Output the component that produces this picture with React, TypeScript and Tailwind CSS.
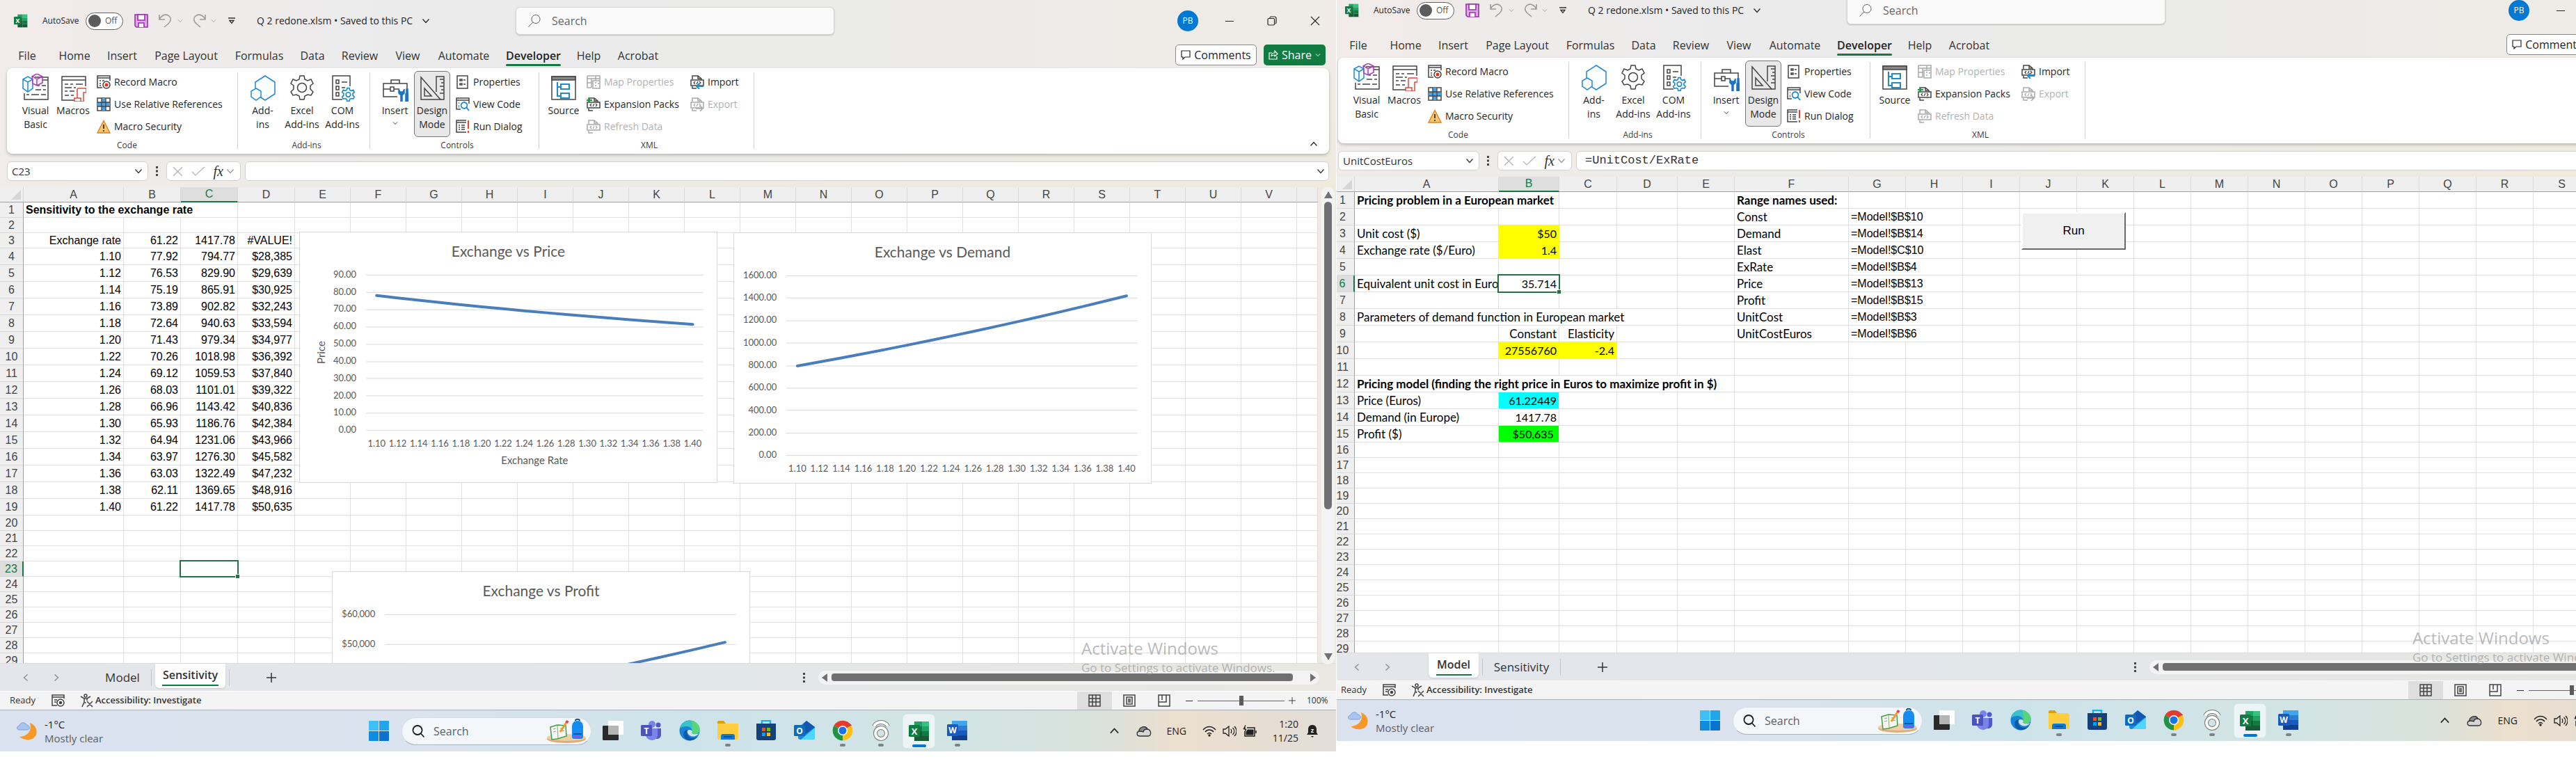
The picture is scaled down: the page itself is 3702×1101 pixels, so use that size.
import { Fragment } from "react";
import type { ReactNode } from "react";
import clsx from "clsx";

type SheetName = "Model" | "Sensitivity";

interface Cell {
  value: string;
  span?: number;
  className?: string;
}

interface SheetData {
  cols: { name: string; width: string }[];
  rowHeight: (row: number) => string;
  cells: Record<string, Cell>;
  font: string;
}

const RATES = ["1.10", "1.12", "1.14", "1.16", "1.18", "1.20", "1.22", "1.24", "1.26", "1.28", "1.30", "1.32", "1.34", "1.36", "1.38", "1.40"];
const PRICES = [77.92, 76.53, 75.19, 73.89, 72.64, 71.43, 70.26, 69.12, 68.03, 66.96, 65.93, 64.94, 63.97, 63.03, 62.11, 61.22];
const DEMANDS = [794.77, 829.9, 865.91, 902.82, 940.63, 979.34, 1018.98, 1059.53, 1101.01, 1143.42, 1186.76, 1231.06, 1276.3, 1322.49, 1369.65, 1417.78];
const PROFITS = [28385, 29639, 30925, 32243, 33594, 34977, 36392, 37840, 39322, 40836, 42384, 43966, 45582, 47232, 48916, 50635];

const RIGHT = "text-right";
const NUMBER = "text-right text-base leading-5";
const YELLOW = "text-right text-base leading-5 bg-[#ffff00] border-[#ffff00]";

const sensitivityCells: Record<string, Cell> = {
  A1: { value: "Sensitivity to the exchange rate", span: 3, className: "font-bold" },
  A3: { value: "Exchange rate", className: RIGHT },
  B3: { value: "61.22", className: RIGHT },
  C3: { value: "1417.78", className: RIGHT },
  D3: { value: "#VALUE!", className: RIGHT },
};
RATES.forEach((rate, i) => {
  const row = i + 4;
  sensitivityCells[`A${row}`] = { value: rate, className: RIGHT };
  sensitivityCells[`B${row}`] = { value: PRICES[i].toFixed(2), className: RIGHT };
  sensitivityCells[`C${row}`] = { value: DEMANDS[i].toFixed(2), className: RIGHT };
  sensitivityCells[`D${row}`] = { value: "$" + PROFITS[i].toLocaleString("en-US"), className: RIGHT };
});

const modelCells: Record<string, Cell> = {
  A1: { value: "Pricing problem in a European market", span: 2, className: "font-bold" },
  A3: { value: "Unit cost ($)" },
  B3: { value: "$50", className: YELLOW },
  A4: { value: "Exchange rate ($/Euro)" },
  B4: { value: "1.4", className: YELLOW },
  A6: { value: "Equivalent unit cost in Euros" },
  B6: { value: "35.714", className: NUMBER },
  A8: { value: "Parameters of demand function in European market", span: 4 },
  B9: { value: "Constant", className: RIGHT },
  C9: { value: "Elasticity", className: RIGHT },
  B10: { value: "27556760", className: YELLOW },
  C10: { value: "-2.4", className: YELLOW },
  A12: { value: "Pricing model (finding the right price in Euros to maximize profit in $)", span: 5, className: "font-bold" },
  A13: { value: "Price (Euros)" },
  B13: { value: "61.22449", className: "text-right text-base leading-5 bg-[#00ffff] border-[#00ffff]" },
  A14: { value: "Demand (in Europe)" },
  B14: { value: "1417.78", className: NUMBER },
  A15: { value: "Profit ($)" },
  B15: { value: "$50,635\u00a0", className: "text-right text-base leading-5 bg-[#00ff00] border-[#00ff00]" },
  F1: { value: "Range names used:", className: "font-bold" },
};
[
  ["Const", "$B$10"],
  ["Demand", "$B$14"],
  ["Elast", "$C$10"],
  ["ExRate", "$B$4"],
  ["Price", "$B$13"],
  ["Profit", "$B$15"],
  ["UnitCost", "$B$3"],
  ["UnitCostEuros", "$B$6"],
].forEach(([name, ref], i) => {
  modelCells[`F${i + 2}`] = { value: name };
  modelCells[`G${i + 2}`] = { value: `=Model!${ref}`, span: 2, className: "text-base leading-5 font-['Liberation_Sans',sans-serif]" };
});

const SHEETS: Record<SheetName, SheetData> = {
  Sensitivity: {
    cols: "ABCDEFGHIJKLMNOPQRSTUVW".split("").map((name) => ({
      name,
      width: name === "A" ? "w-[144px]" : "BCD".includes(name) ? "w-[82px]" : name === "W" ? "" : "w-[80px]",
    })),
    rowHeight: (row) => (row >= 4 && row <= 19 ? "h-[24px]" : "h-[22px]"),
    cells: sensitivityCells,
    font: "font-['Liberation_Sans',sans-serif]",
  },
  Model: {
    cols: [
      { name: "A", width: "w-[207px]" },
      { name: "B", width: "w-[87px]" },
      { name: "C", width: "w-[83px]" },
      { name: "D", width: "w-[87px]" },
      { name: "E", width: "w-[82px]" },
      { name: "F", width: "w-[164px]" },
      ..."GHIJKLMNOPQRS".split("").map((name) => ({ name, width: "w-[82px]" })),
      { name: "T", width: "" },
    ],
    rowHeight: (row) => (row <= 15 ? "h-[24px]" : "h-[22px]"),
    cells: modelCells,
    font: "font-['Lato',sans-serif] text-[17px] leading-5",
  },
};

/* ---------- small glyphs ---------- */

function Chevron({ className = "w-3 h-3", up = false }: { className?: string; up?: boolean }) {
  return (
    <svg viewBox="0 0 12 12" className={clsx("shrink-0", className)} fill="none" stroke="currentColor" strokeWidth="1.3">
      <path d={up ? "M1.5 8.5 6 3.5l4.5 5" : "M1.5 3.5 6 8.5l4.5-5"} />
    </svg>
  );
}

function Dots() {
  return (
    <svg viewBox="0 0 4 16" className="w-1 h-4 shrink-0" fill="#444">
      <path d="M0 1h3v3H0zM0 6.500h3v3H0zM0 12h3v3H0z" />
    </svg>
  );
}

function SearchGlyph({ className, flip = false }: { className: string; flip?: boolean }) {
  return (
    <svg viewBox="0 0 20 20" className={clsx("shrink-0", className)} fill="none" stroke="currentColor">
      {flip ? <path d="M9 2a6.500 6.500 0 1 0 .01 0zM13.500 13l5 5.500" /> : <path d="M12 1.500a6 6 0 1 0 .01 0zM7.800 12 1.500 18.500" />}
    </svg>
  );
}

function ExcelLogo({ className }: { className: string }) {
  return (
    <svg viewBox="0 0 30 30" className={clsx("shrink-0", className)}>
      <path d="M8 1h11v7H8z" fill="#21a366" />
      <path d="M19 1h10v7H19z" fill="#33c481" />
      <path d="M8 8h11v7H8z" fill="#107c41" />
      <path d="M19 8h10v7H19z" fill="#21a366" />
      <path d="M8 15h11v14H8z" fill="#185c37" />
      <path d="M19 15h10v7H19z" fill="#107c41" />
      <path d="M19 22h10v7H19z" fill="#185c37" />
      <rect x="0" y="6" width="16" height="17" rx="1.500" fill="#107c41" />
      <text x="8" y="19.500" textAnchor="middle" fontSize="13" fontWeight="700" fill="#fff" fontFamily="Open Sans">X</text>
    </svg>
  );
}

function WordLogo({ className }: { className: string }) {
  return (
    <svg viewBox="0 0 30 30" className={className}>
      <path d="M7 1h22v7H7z" fill="#41a5ee" />
      <path d="M7 8h22v7H7z" fill="#2b7cd3" />
      <path d="M7 15h22v7H7z" fill="#185abd" />
      <path d="M7 22h22v7H7z" fill="#103f91" />
      <rect x="0" y="6" width="16" height="17" rx="1.500" fill="#185abd" />
      <text x="8" y="19" textAnchor="middle" fontSize="12" fontWeight="700" fill="#fff" fontFamily="Open Sans">W</text>
    </svg>
  );
}

/* ---------- ribbon icons ---------- */

const big = "w-[38px] h-10 shrink-0";
const small = "w-5 h-5 shrink-0";
const line = { fill: "none", stroke: "#444", strokeWidth: 1.5 };

const VisualBasicIcon = (
  <svg viewBox="0 0 38 40" className={big} {...line}>
    <path d="M18 5h19v32H3V28M29 9h8M22 17h3m3 0h6M19 23h8m3 0h4M6 30h4m3 0h11m3 0h7" />
    <path d="M1 8l7-4 7 4v13l-7 5-7-5zM1 8l7 4 7-4M8 12v14" fill="#f2f9fe" stroke="#1e8bcd" />
    <path d="M14 4l7-4 8 4v9l-8 4-6-3V8zM15 4l6 4 8-4M21 8v9" fill="#faf0fb" stroke="#a63fb2" />
  </svg>
);

const MacrosIcon = (
  <svg viewBox="0 0 38 40" className={big} {...line}>
    <path d="M37 18V4H3v34h18M3 9h34M7 15h5m3 0h4m4 0h10M7 20h10m3 0h3M7 25h4m3 0h7M7 31h6m3 0h4" />
    <path d="M26 21h12v6h-4v13H21v-5h4V24c0-2 .500-3 1-3zM25 35h5v5" fill="#fff" stroke="#e8453c" />
  </svg>
);

const AddInsIcon = (
  <svg viewBox="0 0 38 40" className={big} fill="#fbfdff" stroke="#2287d4" strokeWidth="1.500">
    <path d="M22 3l14 9v17l-14 9-14-9V12z" />
    <path d="M9 21l7 4v8l-7 5-7-5v-8z" fill="#fff" />
  </svg>
);

const GEAR = "M16 3h6l1 5 4 2 5-2 3 6-4 3v5l4 4-3 5-5-1-4 2-1 5h-6l-1-5-4-2-5 1-3-5 4-4v-5l-4-3 3-6 5 2 4-2z";

const ExcelAddInsIcon = (
  <svg viewBox="0 0 38 40" className={big} {...line}>
    <path d={GEAR} />
    <circle cx="19" cy="20" r="6.500" />
  </svg>
);

const ComAddInsIcon = (
  <svg viewBox="0 0 38 40" className={big} {...line}>
    <path d="M30 18V3H5v34h14M10 9h4v5h-4zM10 18h4v5h-4zM10 27h4v5h-4zM18 12h8M18 20h5" />
    <g transform="translate(17 19) scale(.550)" stroke="#1e8bcd" strokeWidth="3">
      <path d={GEAR} fill="#fff" />
      <circle cx="19" cy="20" r="6" />
    </g>
  </svg>
);

const InsertIcon = (
  <svg viewBox="0 0 38 40" className={big} {...line}>
    <path d="M22 33H2V14h34v8M13 14V9h12v5M2 22h10m5 0h8M12 19h5v6h-5z" />
    <path d="M24 22v6l3 3v9h2v-9l3-3v-6l-2 4h-4zM35 22h2v7h1v11h-4V29h1z" fill="#1a73c4" stroke="#1a73c4" />
  </svg>
);

const DesignModeIcon = (
  <svg viewBox="0 0 38 40" className={big} {...line}>
    <path d="M3 5v32h28zM8 21v11h10z" />
    <path d="M25 26V4h11v33h-5M30 8h6M32 13h4M30 18h6M32 23h4M30 28h6" />
  </svg>
);

const SourceIcon = (
  <svg viewBox="0 0 38 40" className={big} {...line}>
    <path d="M2 4h34v33H2z" />
    <path d="M2 4h34v5H2z" fill="#8a8886" />
    <path d="M10 12v20h5M10 19h5M15 15h12v7H15zM15 28h12v7H15z" stroke="#1e8bcd" strokeWidth="2" />
  </svg>
);

const RecordMacroIcon = (
  <svg viewBox="0 0 20 20" className={small} {...line}>
    <path d="M19 8V1H1v17h7M1 4h18M4 8h2m2 0h3M4 12h2M4 15h2" />
    <circle cx="14" cy="14" r="5" fill="#fff" />
    <circle cx="14" cy="14" r="2.500" fill="#e8301c" stroke="none" />
  </svg>
);

const RelativeRefIcon = (
  <svg viewBox="0 0 20 20" className={small}>
    <path d="M1 1h18v18H1z" fill="#fff" stroke="#444" strokeWidth="1.500" />
    <path d="M1 7h18v6H1zM7 1h6v18H7z" fill="#4ba3e3" />
    <path d="M1 7h18M1 13h18M7 1v18M13 1v18" stroke="#444" strokeWidth="1.300" />
  </svg>
);

const MacroSecurityIcon = (
  <svg viewBox="0 0 20 20" className={small}>
    <path d="M10 1.500 19 19H1z" fill="#f9c76b" stroke="#e07f1c" strokeWidth="1.300" />
    <path d="M10 7v6M10 15v2" stroke="#333" strokeWidth="1.800" />
  </svg>
);

const PropertiesIcon = (
  <svg viewBox="0 0 20 20" className={small} {...line}>
    <path d="M2 1h15v18H2zM6 6h3v2H6zM6 12h3v2H6zM11 7h3M11 13h3" />
  </svg>
);

const ViewCodeIcon = (
  <svg viewBox="0 0 20 20" className={small} {...line}>
    <path d="M19 9V1H1v16h6M1 4h18M4 8h1M4 12h1M4 14h1" />
    <path d="M12 7a4.500 4.500 0 1 0 .01 0zM15 14l4 5" stroke="#1e8bcd" strokeWidth="1.800" />
  </svg>
);

const RunDialogIcon = (
  <svg viewBox="0 0 20 20" className={small} {...line}>
    <path d="M15 1H1v17h14M1 4h14M4 8h2m2 0h5M4 11h2m2 0h5M4 14h2m2 0h5" />
    <path d="M18 1v12M18 16v3" stroke="#e8301c" strokeWidth="1.800" />
  </svg>
);

const MapPropertiesIcon = (
  <svg viewBox="0 0 20 20" className={small} fill="none" stroke="#a9a9a9" strokeWidth="1.500">
    <path d="M1 1h18v6M1 1v17h6M1 5h18M1 11h7M7 5v13M13 2v5M9 8h10v11H9zM12 11h2M12 15h2M16 12h2" />
  </svg>
);

function XmlIcon({ color, mark }: { color: string; mark?: ReactNode }) {
  return (
    <svg viewBox="0 0 20 20" className={small} fill="none" stroke={color} strokeWidth="1.500">
      <path d="M3 6V1h8l5 4v2M11 1v4h4M1 7h18v8H1zM3 16v3h6" />
      <path d="M7 9l-2 2 2 2M13 9l2 2-2 2M11 9l-2 4" strokeWidth="1.200" />
      {mark}
    </svg>
  );
}

function BigButton({ icon, lines, className, pressed = false }: { icon: ReactNode; lines: string[]; className: string; pressed?: boolean }) {
  return (
    <button
      type="button"
      aria-pressed={pressed || undefined}
      className={clsx(
        "mt-1 h-[95px] pt-[3px] flex flex-col items-center rounded-md border shrink-0 leading-5 whitespace-nowrap",
        pressed ? "bg-[#e8e8e8] border-[#767676]" : "border-transparent",
        className
      )}
    >
      {icon}
      <span className="mt-[3px]">{lines[0]}</span>
      {lines[1] ? <span>{lines[1]}</span> : null}
      {lines[0] === "Insert" && <Chevron className="w-2 h-4" />}
    </button>
  );
}

function SmallButton({ icon, label, disabled = false }: { icon: ReactNode; label: string; disabled?: boolean }) {
  return (
    <button type="button" disabled={disabled} className={clsx("h-8 flex items-center gap-[5px] whitespace-nowrap", disabled && "text-[#b1b1b1]")}>
      {icon}
      {label}
    </button>
  );
}

function RibbonGroup({ label, className, children }: { label: string; className: string; children: ReactNode }) {
  return (
    <>
      <section className={clsx("flex flex-col shrink-0", className)}>
        <div className="flex h-[103px]">{children}</div>
        <h2 className="text-xs leading-4 text-center text-[#3b3b3b]">{label}</h2>
      </section>
      <div className="w-px h-[110px] mt-[6px] bg-[#d1d1d1] shrink-0" />
    </>
  );
}

function Ribbon() {
  return (
    <div className="mx-[10px] h-[123px] flex bg-white rounded-lg shadow-[0_2px_4px_rgba(0,0,0,0.22)] text-sm text-[#262626]">
      <RibbonGroup label="Code" className="w-[331px] pl-[14px]">
        <BigButton icon={VisualBasicIcon} lines={["Visual", "Basic"]} className="w-[54px]" />
        <BigButton icon={MacrosIcon} lines={["Macros"]} className="w-[54px]" />
        <div className="mt-1 ml-[7px] flex flex-col">
          <SmallButton icon={RecordMacroIcon} label="Record Macro" />
          <SmallButton icon={RelativeRefIcon} label="Use Relative References" />
          <SmallButton icon={MacroSecurityIcon} label="Macro Security" />
        </div>
      </RibbonGroup>
      <RibbonGroup label="Add-ins" className="w-[189px] pl-2">
        <BigButton icon={AddInsIcon} lines={["Add-", "ins"]} className="w-[55px]" />
        <BigButton icon={ExcelAddInsIcon} lines={["Excel", "Add-ins"]} className="w-[58px]" />
        <BigButton icon={ComAddInsIcon} lines={["COM", "Add-ins"]} className="w-[58px]" />
      </RibbonGroup>
      <RibbonGroup label="Controls" className="w-[242px] pl-2">
        <BigButton icon={InsertIcon} lines={["Insert"]} className="w-[55px]" />
        <BigButton icon={DesignModeIcon} lines={["Design", "Mode"]} className="w-[52px]" pressed />
        <div className="mt-1 ml-2 flex flex-col">
          <SmallButton icon={PropertiesIcon} label="Properties" />
          <SmallButton icon={ViewCodeIcon} label="View Code" />
          <SmallButton icon={RunDialogIcon} label="Run Dialog" />
        </div>
      </RibbonGroup>
      <RibbonGroup label="XML" className="w-[308px] pl-2">
        <BigButton icon={SourceIcon} lines={["Source"]} className="w-[54px]" />
        <div className="mt-1 ml-[6px] w-[149px] flex flex-col">
          <SmallButton icon={MapPropertiesIcon} label="Map Properties" disabled />
          <SmallButton icon={<XmlIcon color="#444" mark={<path d="M4 0v8M0 4h8" stroke="#1f9d45" strokeWidth="2" />} />} label="Expansion Packs" />
          <SmallButton icon={<XmlIcon color="#a9a9a9" />} label="Refresh Data" disabled />
        </div>
        <div className="mt-1 flex flex-col">
          <SmallButton icon={<XmlIcon color="#444" mark={<path d="M19 16H9m4-4-4 4 4 4" stroke="#1e8bcd" strokeWidth="2" />} />} label="Import" />
          <SmallButton icon={<XmlIcon color="#a9a9a9" mark={<path d="M8 16h10m-4-4 4 4-4 4" strokeWidth="1.500" />} />} label="Export" disabled />
        </div>
      </RibbonGroup>
      <button type="button" aria-label="Collapse ribbon" className="ml-auto mr-4 mb-1 self-end h-5">
        <Chevron up className="w-3 h-3" />
      </button>
    </div>
  );
}

/* ---------- window header ---------- */

function TitleBar({ id }: { id: string }) {
  return (
    <header className="h-[60px] flex items-center text-sm text-[#262626]">
      <div className="w-[741px] pl-5 flex items-center shrink-0">
        <ExcelLogo className="w-5 h-5" />
        <label htmlFor={`${id}-autosave`} className="ml-[21px] w-[62px] text-xs">AutoSave</label>
        <input id={`${id}-autosave`} type="checkbox" role="switch" className="sr-only" />
        <span className="w-[54px] h-[25px] pl-[3px] flex items-center gap-[6px] rounded-full border border-[#616161] bg-white text-xs text-[#555]" aria-hidden="true">
          <span className="w-[18px] h-[18px] rounded-full bg-[#5c5c5c]" />
          Off
        </span>
        <svg viewBox="0 0 20 20" className="ml-4 w-5 h-5 shrink-0" fill="#dfa9e6" stroke="#9b2fae" strokeWidth="1.600">
          <path d="M1 1h18v18H3l-2-2z" />
          <path d="M5 1h10v8H5zM6 19v-6h8v6" fill="#fff" />
        </svg>
        <svg viewBox="0 0 20 20" className="ml-[15px] w-5 h-5 shrink-0" fill="none" stroke="#9c9c9c" strokeWidth="1.600">
          <path d="M1 1v7h8M1 8C4 2 10-1 15 3c4 4 2 8-1 11l-6 5" />
        </svg>
        <Chevron className="ml-[7px] w-2 h-2 text-[#9c9c9c]" />
        <svg viewBox="0 0 20 20" className="ml-[13px] w-5 h-5 shrink-0" fill="none" stroke="#9c9c9c" strokeWidth="1.600">
          <path d="M19 1v7h-8M19 8C16 2 10-1 5 3c-4 4-2 8 1 11l6 5" />
        </svg>
        <Chevron className="ml-[7px] w-2 h-2 text-[#9c9c9c]" />
        <svg viewBox="0 0 10 10" className="ml-[17px] w-[10px] h-[10px] shrink-0" fill="none" stroke="#333" strokeWidth="1.300">
          <path d="M0 1h10M2 4.500l3 4 3-4z" />
        </svg>
        <span className="ml-[31px] w-[237px] whitespace-nowrap">Q 2 redone.xlsm • Saved to this PC</span>
        <Chevron className="w-3 h-3" />
      </div>
      <label className="w-[458px] h-10 px-4 flex items-center gap-[15px] shrink-0 rounded-md border border-[#d6d6d6] bg-[#fafafa] shadow-[0_1px_2px_rgba(0,0,0,0.2)] text-[#5f5f5f]">
        <SearchGlyph className="w-5 h-5" />
        <input type="text" aria-label="Search" placeholder="Search" className="flex-1 text-base bg-transparent outline-none placeholder:text-[#666]" />
      </label>
      <div className="ml-auto flex items-center text-[#262626]">
        <span className="w-[30px] h-[30px] mr-[39px] rounded-full bg-[#0078d4] text-white text-xs flex items-center justify-center">PB</span>
        <button type="button" aria-label="Minimize" className="w-[12px] h-4 mr-12 flex items-center">
          <span className="w-full h-[1px] bg-[#262626]" />
        </button>
        <button type="button" aria-label="Restore" className="mr-12">
          <svg viewBox="0 0 14 14" className="w-[14px] h-[14px]" fill="none" stroke="currentColor" strokeWidth="1.200">
            <rect x="1" y="3.500" width="9.500" height="9.500" rx="1.500" />
            <path d="M4 3V2.500C4 1.500 5 1 6 1h4.500C12.500 1 13 2 13 3.500V9c0 1-.500 2-1.500 2" />
          </svg>
        </button>
        <button type="button" aria-label="Close" className="mr-[23px]">
          <svg viewBox="0 0 14 14" className="w-[14px] h-[14px]" stroke="currentColor" strokeWidth="1.200">
            <path d="M1 1l12 12M13 1 1 13" />
          </svg>
        </button>
      </div>
    </header>
  );
}

const TABS = [
  { name: "File", width: "w-[66px]" },
  { name: "Home", width: "w-[70px]" },
  { name: "Insert", width: "w-[67px]" },
  { name: "Page Layout", width: "w-[117px]" },
  { name: "Formulas", width: "w-[93px]" },
  { name: "Data", width: "w-[60px]" },
  { name: "Review", width: "w-[76px]" },
  { name: "View", width: "w-[62px]" },
  { name: "Automate", width: "w-[99px]" },
  { name: "Developer", width: "w-[101px]" },
  { name: "Help", width: "w-[58px]" },
  { name: "Acrobat", width: "w-[84px]" },
];

function MenuTabs() {
  return (
    <nav className="h-[38px] pl-[6px] flex text-base text-[#333]">
      {TABS.map((tab) => {
        const active = tab.name === "Developer";
        return (
          <button key={tab.name} type="button" className={clsx("pt-2 flex flex-col items-center shrink-0 whitespace-nowrap", tab.width)}>
            <span className={clsx("leading-6", active && "font-semibold text-[#222]")}>{tab.name}</span>
            {active && <span className="w-[79px] h-[3px] rounded-sm bg-[#107c41]" />}
          </button>
        );
      })}
      <div className="ml-auto mr-[15px] flex items-center gap-[10px]">
        <button type="button" className="w-[117px] h-[30px] flex items-center justify-center gap-[5px] rounded-[5px] border border-[#8a8a8a] bg-white text-[#262626]">
          <svg viewBox="0 0 14 14" className="w-[14px] h-[14px]" fill="none" stroke="currentColor" strokeWidth="1.200">
            <path d="M1 1h12v9H6l-3 3v-3H1z" />
          </svg>
          Comments
        </button>
        <button type="button" className="w-[89px] h-[30px] flex items-center justify-center gap-[5px] rounded-[5px] bg-[#107c41] text-white">
          <svg viewBox="0 0 14 14" className="w-[14px] h-[14px]" fill="none" stroke="currentColor" strokeWidth="1.200">
            <path d="M5 4H1v9h11V9M4 9c0-4 2-5 5-5V1l4 4.500L9 9V7C7 7 5 7 4 9z" />
          </svg>
          Share
          <Chevron className="w-2 h-2" />
        </button>
      </div>
    </nav>
  );
}

function FormulaBar({ cell, formula }: { cell: string; formula: string }) {
  const box = "h-7 flex items-center rounded-md border border-[#d1d1d1] bg-white";
  return (
    <div className="mt-[11px] mb-[9px] mx-[10px] flex items-center text-[#333]">
      <div className={clsx(box, "w-[203px] pl-[6px] pr-[7px]")}>
        <input aria-label="Name box" defaultValue={cell} className="flex-1 min-w-0 text-[15px] outline-none" />
        <Chevron className="w-3 h-3" />
      </div>
      <div className="w-[26px] flex justify-center">
        <Dots />
      </div>
      <div className={clsx(box, "w-[107px] px-2 gap-3")}>
        <svg viewBox="0 0 14 14" className="w-[15px] h-[15px]" stroke="#b5b5b5" strokeWidth="1.300">
          <path d="M1 1l12 12M13 1 1 13" />
        </svg>
        <svg viewBox="0 0 20 14" className="w-5 h-[14px]" fill="none" stroke="#b5b5b5" strokeWidth="1.300">
          <path d="M1 8l5 5L19 1" />
        </svg>
        <span className="font-['Liberation_Serif',serif] italic text-xl leading-6">fx</span>
        <Chevron className="-ml-2 w-3 h-3 text-[#999]" />
      </div>
      <div className={clsx(box, "ml-[6px] flex-1 pl-3 pr-[5px]")}>
        <input aria-label="Formula" defaultValue={formula} className="flex-1 min-w-0 font-['Liberation_Mono',monospace] text-[17px] outline-none" />
        <Chevron className="w-3 h-3" />
      </div>
    </div>
  );
}

/* ---------- charts ---------- */

interface ChartProps {
  title: string;
  values: number[];
  ticks: number[];
  format: (n: number) => string;
  left: number;
  bottom: number;
  step: number;
  xTitle?: string;
  yTitle?: string;
  className: string;
}

function LineChart({ title, values, ticks, format, left, bottom, step, xTitle, yTitle, className }: ChartProps) {
  const right = 581;
  const top = 61;
  const slot = (right - left) / values.length;
  const unit = step / (ticks[0] - ticks[1]);
  const max = ticks[0];
  const points = values.map((v, i) => `${left + slot * (i + 0.5)},${top + (max - v) * unit}`).join(" ");

  return (
    <figure className={clsx("absolute w-[601px] h-[361px] bg-white border border-[#d9d9d9]", className)}>
      <svg viewBox="0 0 600 360" className="w-full h-full font-['Lato',sans-serif]" fill="#595959">
        <text x="300" y="35" textAnchor="middle" fontSize="21">{title}</text>
        {ticks.map((tick, i) => (
          <Fragment key={tick}>
            <path d={`M${left} ${Math.round(top + i * step) + 0.5}H${right}`} stroke="#d9d9d9" />
            <text x={left - 14} y={top + i * step + 4} textAnchor="end" fontSize="13">{format(tick)}</text>
          </Fragment>
        ))}
        {RATES.map((rate, i) => (
          <text key={rate} x={left + slot * (i + 0.5)} y={bottom + 24} textAnchor="middle" fontSize="13">{rate}</text>
        ))}
        {xTitle && <text x={(left + right) / 2} y={bottom + 49} textAnchor="middle" fontSize="15">{xTitle}</text>}
        {yTitle && <text transform="translate(36 173) rotate(-90)" textAnchor="middle" fontSize="15">{yTitle}</text>}
        <polyline points={points} fill="none" stroke="#4a7ebb" strokeWidth="4" strokeLinecap="round" strokeLinejoin="round" />
      </svg>
    </figure>
  );
}

function SensitivityCharts() {
  const twoDigits = (n: number) => n.toFixed(2);
  return (
    <>
      <LineChart title="Exchange vs Price" values={PRICES} ticks={[90, 80, 70, 60, 50, 40, 30, 20, 10, 0]} format={twoDigits} left={95} bottom={285} step={24.9} xTitle="Exchange Rate" yTitle="Price" className="left-[430px] top-[64px]" />
      <LineChart title="Exchange vs Demand" values={DEMANDS} ticks={[1600, 1400, 1200, 1000, 800, 600, 400, 200, 0]} format={twoDigits} left={75} bottom={320} step={32.4} className="left-[1054px] top-[65px]" />
      <LineChart title="Exchange vs Profit" values={PROFITS} ticks={[60000, 50000, 40000, 30000, 20000, 10000, 0]} format={(n) => "$" + n.toLocaleString("en-US")} left={75} bottom={320} step={43.2} className="left-[477px] top-[552px]" />
    </>
  );
}

/* ---------- grid ---------- */

const ROWS = Array.from({ length: 29 }, (_, i) => i + 1);

function Grid({ sheet, selected, children }: { sheet: SheetData; selected: string; children: ReactNode }) {
  const selCol = selected[0];
  const selRow = Number(selected.slice(1));

  return (
    <div className="relative flex-1 min-w-0 h-[684px] overflow-hidden bg-white">
      <table className="w-full table-fixed border-separate border-spacing-0 text-base leading-5 text-black">
        <colgroup>
          <col className="w-[34px]" />
          {sheet.cols.map((col) => (
            <col key={col.name} className={col.width} />
          ))}
        </colgroup>
        <thead>
          <tr className="h-[22px] bg-[#efefef] font-['Liberation_Sans',sans-serif] text-[#444]">
            <th className="p-0 border-r border-b border-r-[#d4d4d4] border-b-[#a0a0a0]">
              <svg viewBox="0 0 14 14" className="ml-auto mr-[3px] w-[14px] h-[14px]" fill="#d6d6d6">
                <path d="M14 0v14H0z" />
              </svg>
            </th>
            {sheet.cols.map((col, i) => (
              <th
                key={col.name}
                scope="col"
                className={clsx(
                  "p-0 font-normal border-r border-r-[#d9d9d9] overflow-hidden",
                  col.name === selCol ? "bg-[#dedede] text-[#107c41] border-b-2 border-b-[#107c41]" : "border-b border-b-[#a0a0a0]"
                )}
              >
                {i === sheet.cols.length - 1 ? "" : col.name}
              </th>
            ))}
          </tr>
        </thead>
        <tbody className={sheet.font}>
          {ROWS.map((row) => {
            let skip = 0;
            return (
              <tr key={row} className={sheet.rowHeight(row)}>
                <th
                  scope="row"
                  className={clsx(
                    "p-0 font-normal text-base leading-5 font-['Liberation_Sans',sans-serif] border-b border-b-[#d9d9d9]",
                    row === selRow ? "bg-[#dedede] text-[#107c41] border-r-2 border-r-[#107c41]" : "bg-[#efefef] text-[#444] border-r border-r-[#a0a0a0]"
                  )}
                >
                  {row}
                </th>
                {sheet.cols.map((col) => {
                  if (skip > 0) {
                    skip -= 1;
                    return null;
                  }
                  const ref = `${col.name}${row}`;
                  const cell = sheet.cells[ref];
                  skip = (cell?.span ?? 1) - 1;
                  const isSelected = ref === selected;
                  return (
                    <td
                      key={ref}
                      colSpan={cell?.span}
                      className={clsx(
                        "py-0 px-[3px] border-r border-b border-[#e0e0e0] whitespace-nowrap",
                        isSelected ? "relative" : "overflow-hidden",
                        cell?.className
                      )}
                    >
                      {cell?.value}
                      {isSelected && (
                        <span className="absolute -inset-[2px] border-2 border-[#217346]">
                          <span className="absolute -right-[3px] -bottom-[3px] w-[6px] h-[6px] bg-[#217346] border-t border-l border-white" />
                        </span>
                      )}
                    </td>
                  );
                })}
              </tr>
            );
          })}
        </tbody>
      </table>
      {children}
    </div>
  );
}

function VerticalScroll() {
  return (
    <div className="w-[26px] h-[686px] -mb-[2px] pl-[5px] pr-[2px] shrink-0">
      <div className="h-full flex flex-col items-center rounded-full bg-[#f3f3f3] text-[#707070]">
        <svg viewBox="0 0 12 10" className="mt-[6px] w-3 h-[10px]" fill="currentColor">
          <path d="M6 0l6 10H0z" />
        </svg>
        <div className="mt-[5px] w-[11px] h-[442px] rounded-full bg-[#707070]" />
        <svg viewBox="0 0 12 10" className="mt-auto mb-[6px] w-3 h-[10px]" fill="currentColor">
          <path d="M6 10 0 0h12z" />
        </svg>
      </div>
    </div>
  );
}

/* ---------- bottom bars ---------- */

function SheetTab({ name, active, className }: { name: SheetName; active: boolean; className: string }) {
  return (
    <button type="button" className={clsx("flex flex-col items-center text-[#333]", active ? "h-[35px] pt-1 rounded-b-md bg-white text-base font-semibold shadow-sm" : "h-[39px] pt-2 text-[17px]", className)}>
      <span className="leading-6">{name}</span>
      {active && <span className={clsx("mt-[2px] h-[2px] bg-[#107c41]", name === "Model" ? "w-[51px]" : "w-[81px]")} />}
    </button>
  );
}

function SheetBar({ active }: { active: SheetName }) {
  return (
    <div className="h-10 flex bg-linear-to-r from-[#e4e6ec] via-[#e2e7ea] to-[#e9e7e0] border-t border-[#dcdcdc]">
      <div className="w-[140px] pl-[31px] flex items-center gap-8 shrink-0 text-[#8a8a8a]">
        <Chevron className="w-3 h-3 rotate-90" />
        <Chevron className="w-3 h-3 -rotate-90" />
      </div>
      <SheetTab name="Model" active={active === "Model"} className="w-[72px]" />
      <span className="mx-[5px] mt-2 w-px h-6 bg-[#c4c4c4]" />
      <SheetTab name="Sensitivity" active={active === "Sensitivity"} className="w-[101px]" />
      <span className="mx-[5px] mt-2 w-px h-6 bg-[#c4c4c4]" />
      <button type="button" aria-label="New sheet" className="ml-[48px] flex items-center text-[#333]">
        <svg viewBox="0 0 14 14" className="w-[14px] h-[14px]" stroke="currentColor" strokeWidth="1.500">
          <path d="M7 0v14M0 7h14" />
        </svg>
      </button>
      <div className="ml-auto mr-6 w-[742px] flex items-center gap-[18px]">
        <Dots />
        <div className="flex-1 h-5 px-[5px] flex items-center rounded-full bg-[#f3f3f3] text-[#707070]">
          <svg viewBox="0 0 8 12" className="w-2 h-3" fill="currentColor">
            <path d="M8 0v12L0 6z" />
          </svg>
          <div className="ml-[6px] mr-[25px] flex-1 h-[11px] rounded bg-[#707070]" />
          <svg viewBox="0 0 8 12" className="w-2 h-3" fill="currentColor">
            <path d="M0 0v12l8-6z" />
          </svg>
        </div>
      </div>
    </div>
  );
}

function StatusBar({ id }: { id: string }) {
  return (
    <div className="h-7 flex items-center bg-[#f4f4f4] border-t border-t-white border-b border-b-[#a9b0b8] text-[13px] text-[#333]">
      <span className="pl-[14px] w-[74px]">Ready</span>
      <svg viewBox="0 0 20 18" className="w-5 h-[18px]" {...line}>
        <path d="M18 6V1H1v15h7M1 4h17M4 8h4M4 11h3" />
        <circle cx="13" cy="12" r="5" />
        <circle cx="13" cy="12" r="1.500" fill="#444" />
      </svg>
      <svg viewBox="0 0 20 20" className="ml-5 mr-[3px] w-5 h-5" {...line}>
        <circle cx="9" cy="3" r="2" />
        <path d="M2 4l5 3v5l-3 7M16 4l-5 3v3M7 7h4M9 12l-1 2M11 11l8 8M19 11l-8 8" />
      </svg>
      <span className="font-semibold">Accessibility: Investigate</span>
      <div className="ml-auto flex items-center h-full">
        <button type="button" aria-label="Normal view" className="w-[50px] h-full flex items-center justify-center bg-[#dedede]">
          <svg viewBox="0 0 18 18" className="w-[18px] h-[18px]" {...line}>
            <path d="M1 1h16v16H1zM1 6h16M1 11h16M6 1v16M11 1v16" />
          </svg>
        </button>
        <button type="button" aria-label="Page layout view" className="w-[50px] h-full flex items-center justify-center">
          <svg viewBox="0 0 18 18" className="w-[18px] h-[18px]" {...line}>
            <path d="M1 1h16v16H1zM5 4h8v10H5zM7 7h4M7 9h4M7 11h4" />
          </svg>
        </button>
        <button type="button" aria-label="Page break view" className="w-[50px] h-full flex items-center justify-center">
          <svg viewBox="0 0 18 18" className="w-[18px] h-[18px]" {...line}>
            <path d="M1 1h16v16H1zM6 1v7M12 1v10H1" />
          </svg>
        </button>
        <span className="ml-[6px] w-[10px] h-px bg-[#333]" />
        <input
          id={`${id}-zoom`}
          type="range"
          aria-label="Zoom"
          min={10}
          max={190}
          defaultValue={100}
          className="ml-[7px] mr-[6px] w-[125px] h-4 appearance-none bg-linear-to-r from-[#666] to-[#666] bg-[length:100%_1px] bg-center bg-no-repeat [&::-webkit-slider-thumb]:appearance-none [&::-webkit-slider-thumb]:w-[6px] [&::-webkit-slider-thumb]:h-[14px] [&::-webkit-slider-thumb]:bg-[#5c5c5c]"
        />
        <svg viewBox="0 0 10 10" className="w-[10px] h-[10px]" stroke="#444" strokeWidth="1">
          <path d="M5 0v10M0 5h10" />
        </svg>
        <label htmlFor={`${id}-zoom`} className="ml-4 w-[42px] text-xs">100%</label>
      </div>
    </div>
  );
}

const APPS: { name: string; icon: ReactNode; state?: "open" | "active" }[] = [
  {
    name: "Task view",
    icon: (
      <svg viewBox="0 0 30 30" className="w-[30px] h-[30px]">
        <rect x="0" y="8" width="23" height="21" rx="1" fill="#2a2a2a" />
        <rect x="8" y="1" width="22" height="20" rx="1" fill="#fff" />
        <path d="M8 8h15v13H8z" fill="#b5b5b5" />
      </svg>
    ),
  },
  {
    name: "Teams",
    icon: (
      <svg viewBox="0 0 30 30" className="w-[30px] h-[30px]">
        <circle cx="16" cy="6" r="5" fill="#7b83eb" />
        <circle cx="25" cy="7" r="3.500" fill="#5059c9" />
        <path d="M19 12h10v9c0 4-3 6-6 6h-4z" fill="#5059c9" />
        <path d="M7 12h17v10c0 4-4 7-8 7s-9-3-9-8z" fill="#7b83eb" />
        <rect x="0" y="7" width="16" height="16" rx="1.500" fill="#4b53bc" />
        <text x="8" y="19.500" textAnchor="middle" fontSize="12" fontWeight="700" fill="#fff" fontFamily="Open Sans">T</text>
      </svg>
    ),
  },
  {
    name: "Edge",
    icon: (
      <svg viewBox="0 0 30 30" className="w-[30px] h-[30px]">
        <circle cx="15" cy="15" r="14.500" fill="#1483d8" />
        <path d="M1 12C3 4 9 0 16 .500c8 .500 14 7 13.500 13.500-.500 5-5 7-10 6-2-.500-3-1.500-1-3 1-4-3-8-8-8-4 0-7 1-9.500 3z" fill="#36c3c9" />
        <path d="M18 1c7 1 12 7 11.500 13-.500 5-5 7-10 6-2-.500-3-1.500-1-3 2-5-1-12-.500-16z" fill="#58d675" />
        <path d="M13 14c-3 3-2 9 3 11 4 2 8 1 11-2-3 5-9 7-14 6-6-2-8-8-6-12 1-2 3-3 6-3z" fill="#0c59a4" />
        <path d="M12 15c2-2 6-1 7 1-1 2-2 3 1 4 3 .500 6 .200 8-1-1 3-5 5-9 4.500-4-.500-8-4-7-8.500z" fill="#cfe4ec" />
      </svg>
    ),
  },
  {
    name: "File Explorer",
    state: "open",
    icon: (
      <svg viewBox="0 0 30 30" className="w-[30px] h-[30px]">
        <path d="M0 3c0-1 .500-2 2-2h7l3 4H0z" fill="#e0a000" />
        <rect x="0" y="5" width="30" height="23" rx="1.500" fill="#ffcd3d" />
        <path d="M5 28v-5c0-2 1-3 3-3h14c2 0 3 1 3 3v5z" fill="#0f78d4" />
        <path d="M9 24h12" stroke="#0b4f96" strokeWidth="2" />
      </svg>
    ),
  },
  {
    name: "Store",
    icon: (
      <svg viewBox="0 0 30 30" className="w-[30px] h-[30px]">
        <path d="M9 6V1h12v5" fill="none" stroke="#18b4f1" strokeWidth="2.500" />
        <path d="M1 5h28v21c0 2-1 3-3 3H4c-2 0-3-1-3-3z" fill="#16407a" />
        <path d="M9 11h5v5H9z" fill="#f25022" />
        <path d="M16 11h5v5h-5z" fill="#7fba00" />
        <path d="M9 18h5v5H9z" fill="#00a4ef" />
        <path d="M16 18h5v5h-5z" fill="#ffb900" />
      </svg>
    ),
  },
  {
    name: "Outlook",
    icon: (
      <svg viewBox="0 0 30 30" className="w-[30px] h-[30px]">
        <path d="M6 11 18 1l12 9v15c0 2-1 3-3 3H9c-2 0-3-1-3-3z" fill="#1a8ae0" />
        <path d="M13 6 18 1l12 9-16 12z" fill="#1257b0" />
        <path d="M30 11v14c0 2-1 3-3 3H10z" fill="#4fd6ff" />
        <rect x="0" y="7" width="16" height="16" rx="1.500" fill="#0f6cbd" />
        <text x="8" y="19.500" textAnchor="middle" fontSize="12" fontWeight="700" fill="#fff" fontFamily="Open Sans">O</text>
      </svg>
    ),
  },
  {
    name: "Chrome",
    state: "open",
    icon: (
      <svg viewBox="0 0 30 30" className="w-[30px] h-[30px]">
        <path d="M15 15 2.500 7.800A14.500 14.500 0 0 1 27.500 7.800z" fill="#e33b2e" />
        <path d="M15 15 27.500 7.800A14.500 14.500 0 0 1 15 29.500z" fill="#fbc116" />
        <path d="M15 15v14.500A14.500 14.500 0 0 1 2.500 7.800z" fill="#229342" />
        <path d="M15 8h13l-1-2H15z" fill="#e33b2e" />
        <circle cx="15" cy="15" r="7" fill="#fff" />
        <circle cx="15" cy="15" r="5.500" fill="#1a73e8" />
      </svg>
    ),
  },
  {
    name: "Ring",
    state: "open",
    icon: (
      <svg viewBox="0 0 30 30" className="w-[30px] h-[30px]" fill="none">
        <circle cx="15" cy="19" r="8" stroke="#777" strokeWidth="6" />
        <circle cx="15" cy="19" r="8" stroke="#fff" strokeWidth="4" />
        <path d="M5 9c4-8 16-8 20 0" stroke="#777" strokeWidth="6" />
        <path d="M5 9c4-8 16-8 20 0" stroke="#fff" strokeWidth="4" />
      </svg>
    ),
  },
  { name: "Excel", state: "active", icon: <ExcelLogo className="w-[30px] h-[30px]" /> },
  { name: "Word", state: "open", icon: <WordLogo className="w-[30px] h-[30px]" /> },
];

function Taskbar() {
  return (
    <footer className="h-[59px] flex text-sm text-[#222] bg-[linear-gradient(90deg,#d9e2ee_0%,#dbe3ef_30%,#cde3ea_52%,#d3e4e3_74%,#d9e2dc_82%,#ecdfce_88%,#e2ddd8_100%)]">
      <div className="w-[530px] pl-6 flex items-center gap-[10px] shrink-0">
        <svg viewBox="0 0 30 30" className="w-[30px] h-[30px]">
          <path d="M19 3c8 3 11 10 9 17-3 8-15 10-24 3 8 0 19-6 15-20z" fill="#f6992a" />
          <path d="M4 13c-5 0-4-6 0-6 1-5 8-6 10-1 5 0 6 7 1 7z" fill="#a9c4ef" stroke="#7ea0da" />
        </svg>
        <div className="text-[15px] leading-5">
          <p>-1°C</p>
          <p className="text-[#5c6066]">Mostly clear</p>
        </div>
      </div>
      <button type="button" aria-label="Start" className="mr-[18px]">
        <svg viewBox="0 0 29 29" className="w-[29px] h-[29px]">
          <path d="M0 1c0-.500.500-1 1-1h13v14H0z" fill="#3ec0f7" />
          <path d="M15 0h13c.500 0 1 .500 1 1v13H15z" fill="#23a5ec" />
          <path d="M0 15h14v14H1c-.500 0-1-.500-1-1z" fill="#0f8ce0" />
          <path d="M15 15h14v13c0 .500-.500 1-1 1H15z" fill="#0a73d0" />
        </svg>
      </button>
      <label className="w-[273px] h-10 pl-[13px] pr-[6px] self-center flex items-center gap-3 rounded-full bg-[#f3f7fa] border border-[#d5dde3] border-b-[#a9b7c0]">
        <SearchGlyph flip className="w-5 h-5 [stroke-width:1.8]" />
        <input type="text" aria-label="Search Windows" placeholder="Search" className="flex-1 min-w-0 text-base bg-transparent outline-none placeholder:text-[#5c6066]" />
        <svg viewBox="0 0 58 36" className="w-[58px] h-9">
          <ellipse cx="29" cy="29" rx="28" ry="6" fill="#dcae7d" />
          <ellipse cx="29" cy="27" rx="28" ry="5" fill="#f0cfa5" />
          <path d="M6 12l10-3 12 1 1 15-13 4-8 1z" fill="#f4f8ee" stroke="#3f9e4d" strokeWidth="1.500" />
          <path d="M16 10l1 18M10 15l4-1M10 19l4-1M20 14l6-1M20 18l6-1" stroke="#94a68c" />
          <path d="M30 4 20 19" stroke="#f39b2f" strokeWidth="3" />
          <path d="M31 3l-2 3" stroke="#e6405f" strokeWidth="4" />
          <path d="M37 12c0-6 3-9 8-9s8 3 8 9v14c0 2-1 3-3 3H40c-2 0-3-1-3-3z" fill="#148df2" />
          <path d="M42 3c0-3 6-3 6 0M39 22h12" fill="none" stroke="#0a4fa8" strokeWidth="2" />
          <path d="M39 26h12" stroke="#a14be0" strokeWidth="2" />
        </svg>
      </label>
      <div className="ml-[3px] flex items-center">
        {APPS.map((app) => (
          <button key={app.name} type="button" aria-label={app.name} className="w-[55px] h-full flex justify-center items-center">
            <span className={clsx("w-[47px] h-[50px] pt-[9px] flex flex-col items-center rounded-md", app.state === "active" && "bg-[#edf4f5] border border-[#dbe8ea]")}>
              {app.icon}
              {app.state === "open" && <span className="mt-[4px] w-2 h-[4px] rounded-full bg-[#7c8286]" />}
              {app.state === "active" && <span className="mt-[4px] w-5 h-[4px] rounded-full bg-[#0078d4]" />}
            </span>
          </button>
        ))}
      </div>
      <div className="ml-auto flex items-center text-[#222]">
        <Chevron up className="w-[15px] h-[15px] mr-6" />
        <svg viewBox="0 0 22 16" className="w-[22px] h-4 mr-[22px]" fill="#d5d5d5" stroke="#333" strokeWidth="1.300">
          <path d="M5 15c-5 0-5-6-1-7 0-6 9-9 12-3 6 1 6 10 1 10z" />
          <path d="M4 8c0-6 9-9 12-3-4 0-5 1-6 4-2-1-4-1-6-1z" fill="#8a8a8a" />
        </svg>
        <span className="mr-[23px]">ENG</span>
        <svg viewBox="0 0 20 16" className="w-5 h-4 mr-[9px]" fill="none" stroke="#222" strokeWidth="1.400">
          <path d="M1 6c5-6 13-6 18 0M4 9c3-4 9-4 12 0M7 12c2-2 4-2 6 0" />
          <circle cx="10" cy="14" r="1" fill="#222" />
        </svg>
        <svg viewBox="0 0 20 16" className="w-5 h-4 mr-[9px]" fill="none" stroke="#222" strokeWidth="1.300">
          <path d="M1 5h3l5-4v14l-5-4H1zM12 5c1 2 1 4 0 6M14.500 3c3 3 3 7 0 10M17 1c4 4 4 10 0 14" />
        </svg>
        <svg viewBox="0 0 20 18" className="w-5 h-[18px] mr-[7px]" fill="none" stroke="#222" strokeWidth="1.500">
          <path d="M6 4h11v12H3V9M19 8v4" />
          <path d="M7 7h8v7H5v-4zM4 0 1 6h4L3 10" fill="#222" strokeWidth="1" />
        </svg>
        <div className="w-[53px] leading-5 text-right">
          <p>1:20</p>
          <p>11/25</p>
        </div>
        <svg viewBox="0 0 18 20" className="ml-[11px] mr-[25px] w-[18px] h-5" fill="#222">
          <path d="M1 15 3 12V7c0-4 3-6 6-6s6 2 6 6v5l2 3zM7 17h4l-2 2z" />
          <text x="9" y="12" textAnchor="middle" fontSize="9" fontWeight="700" fill="#fff" fontFamily="Open Sans">z</text>
        </svg>
      </div>
    </footer>
  );
}

interface ExcelWindowProps {
  sheetName: SheetName;
  selected: string;
  nameBox: string;
  formula: string;
  children: ReactNode;
}

function ExcelWindow({ sheetName, selected, nameBox, formula, children }: ExcelWindowProps) {
  return (
    <div className="relative bg-[linear-gradient(175deg,transparent_55%,rgba(238,234,216,0.7)_100%),linear-gradient(90deg,#f1ebe9_0%,#ebebec_35%,#ebebea_60%,#f0ebe6_100%)] bg-[length:100%_290px] bg-no-repeat">
      <TitleBar id={sheetName} />
      <MenuTabs />
      <Ribbon />
      <FormulaBar cell={nameBox} formula={formula} />
      <div className="flex bg-[#edeae1]">
        <Grid sheet={SHEETS[sheetName]} selected={selected}>
          {children}
        </Grid>
        <VerticalScroll />
      </div>
      <SheetBar active={sheetName} />
      <StatusBar id={sheetName} />
      <Taskbar />
      {/* Activation watermark floats above everything, including the scrollbar */}
      <div className="absolute right-[82px] bottom-[108px] w-[284px] text-[#8c8c8c]/60 pointer-events-none whitespace-nowrap">
        <p className="text-2xl leading-8">Activate Windows</p>
        <p className="text-[17px] leading-6">Go to Settings to activate Windows.</p>
      </div>
    </div>
  );
}

export default function App() {
  return (
    <main className="min-h-screen flex items-start gap-px bg-white overflow-hidden font-['Open_Sans',sans-serif]">
      <div className="flex-[1920] min-w-0">
        <ExcelWindow sheetName="Sensitivity" selected="C23" nameBox="C23" formula="">
          <SensitivityCharts />
        </ExcelWindow>
      </div>
      <div className="flex-[1781] min-w-0 overflow-hidden">
        <div className="w-[107.8%] -ml-2 -mt-[15px]">
          <ExcelWindow sheetName="Model" selected="B6" nameBox="UnitCostEuros" formula="=UnitCost/ExRate">
            <button
              type="button"
              className="absolute left-[992px] top-[51px] w-[150px] h-[54px] bg-[#f0f0f0] border-2 border-t-white border-l-white border-r-[#696969] border-b-[#696969] font-['Liberation_Sans',sans-serif] text-[17px]"
            >
              Run
            </button>
          </ExcelWindow>
        </div>
      </div>
    </main>
  );
}
